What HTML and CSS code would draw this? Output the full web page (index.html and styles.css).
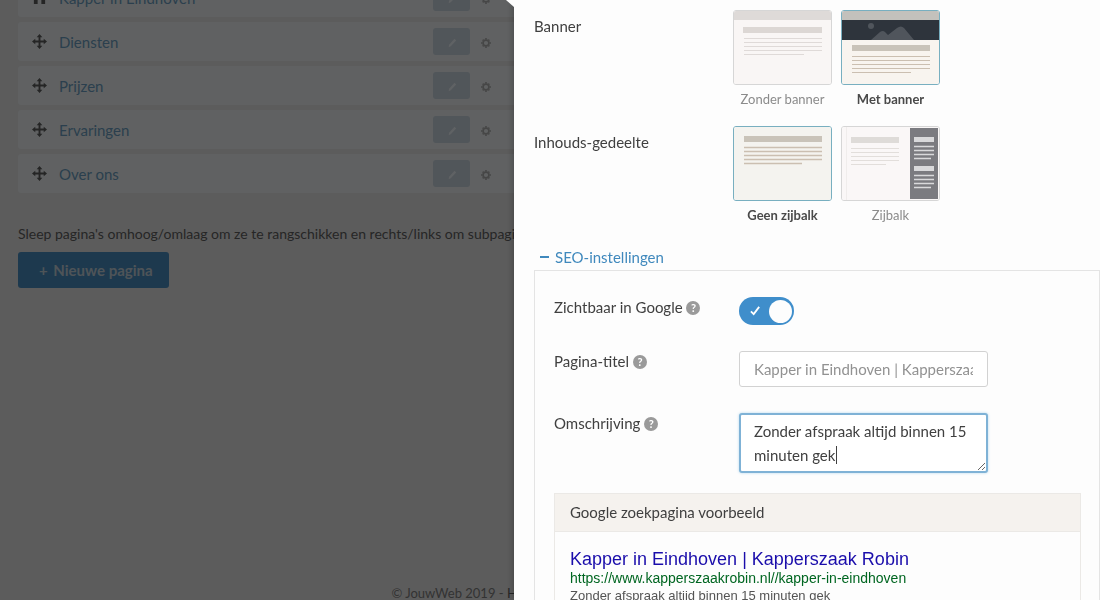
FILE: index.html
```html
<!DOCTYPE html>
<html lang="nl">
<head>
  <meta charset="UTF-8" />
  <title>Pagina's - JouwWeb</title>
  <meta name="viewport" content="width=device-width, initial-scale=1" />
  <link rel="stylesheet" href="styles.css">
</head>
<body>
  <svg width="0" height="0" class="sprite" aria-hidden="true">
    <symbol id="move" viewBox="0 0 16 16">
      <path d="M8 0l3 3.500H9V7h3.500V5L16 8l-3.500 3V9H9v3.500h2L8 16l-3-3.500h2V9H3.500v2L0 8l3.500-3v2H7V3.500H5z"/>
    </symbol>
    <symbol id="pencil" viewBox="0 0 12 12">
      <path d="M9 1l2 2-6.500 7L2 11l.500-3z"/>
    </symbol>
    <symbol id="gear" viewBox="0 0 12 12">
      <circle cx="6" cy="6" r="3.500" fill="none" stroke="currentColor" stroke-width="2"/>
      <path d="M6 0v2M6 10v2M0 6h2M10 6h2M2 2l1 1M9 9l1 1M2 10l1-1M9 3l1-1" stroke="currentColor" stroke-width="2"/>
    </symbol>
  </svg>

  <main class="page">
    <ul class="page-list">
      <li class="page-row">
        <svg class="move" viewBox="0 0 16 16"><path d="M8 1L0 8h2v7h4v-5h4v5h4V8h2z"/></svg>
        <a href="#">Kapper in Eindhoven</a>
        <button class="edit-btn" aria-label="Bewerken"><svg><use href="#pencil"/></svg></button>
        <button class="gear-btn" aria-label="Instellingen"><svg><use href="#gear"/></svg></button>
      </li>
      <li class="page-row">
        <svg class="move"><use href="#move"/></svg>
        <a href="#">Diensten</a>
        <button class="edit-btn" aria-label="Bewerken"><svg><use href="#pencil"/></svg></button>
        <button class="gear-btn" aria-label="Instellingen"><svg><use href="#gear"/></svg></button>
      </li>
      <li class="page-row">
        <svg class="move"><use href="#move"/></svg>
        <a href="#">Prijzen</a>
        <button class="edit-btn" aria-label="Bewerken"><svg><use href="#pencil"/></svg></button>
        <button class="gear-btn" aria-label="Instellingen"><svg><use href="#gear"/></svg></button>
      </li>
      <li class="page-row">
        <svg class="move"><use href="#move"/></svg>
        <a href="#">Ervaringen</a>
        <button class="edit-btn" aria-label="Bewerken"><svg><use href="#pencil"/></svg></button>
        <button class="gear-btn" aria-label="Instellingen"><svg><use href="#gear"/></svg></button>
      </li>
      <li class="page-row">
        <svg class="move"><use href="#move"/></svg>
        <a href="#">Over ons</a>
        <button class="edit-btn" aria-label="Bewerken"><svg><use href="#pencil"/></svg></button>
        <button class="gear-btn" aria-label="Instellingen"><svg><use href="#gear"/></svg></button>
      </li>
    </ul>
    <p class="hint">Sleep pagina's omhoog/omlaag om ze te rangschikken en rechts/links om subpagina's te maken.</p>
    <button class="new-page"><span>+</span> Nieuwe pagina</button>
    <footer>© JouwWeb 2019 - <a href="#">Help</a> - <a href="#">Voorwaarden</a> - <a href="#">Privacybeleid</a></footer>
  </main>

  <div class="overlay"></div>

  <aside class="panel">
    <div class="setting">
      <span class="setting-label" id="bannerLabel">Banner</span>
      <div class="options" role="radiogroup" aria-labelledby="bannerLabel">
        <label class="option">
          <input type="radio" name="banner">
          <svg class="thumb" viewBox="0 0 97 73">
            <rect width="97" height="73" fill="#f9f6f5"/>
            <rect width="97" height="9" fill="#dedad8"/>
            <rect x="9" y="16" width="79" height="6" fill="#dcd7d4"/>
            <path d="M10 27.500h78M10 31.500h78M10 35.500h78M10 39.500h78M10 43.500h60" stroke="#dfdad8"/>
          </svg>
          <span>Zonder banner</span>
        </label>
        <label class="option">
          <input type="radio" name="banner" checked>
          <svg class="thumb" viewBox="0 0 97 73">
            <rect width="97" height="73" fill="#f8f4ef"/>
            <rect width="97" height="9" fill="#c3c1bc"/>
            <rect y="9" width="97" height="20" fill="#2e343c"/>
            <circle cx="29" cy="15" r="3" fill="#50555c"/>
            <path d="M29 29l9-8q3-2 5 0l3 3 9-7q4-3 7 0l10 12z" fill="#50555c"/>
            <rect x="10" y="34" width="78" height="6" fill="#c9c3b9"/>
            <path d="M10 45.500h78M10 49.500h78M10 53.500h78M10 57.500h78M10 61.500h59" stroke="#cbbfb1"/>
          </svg>
          <span>Met banner</span>
        </label>
      </div>
    </div>

    <div class="setting">
      <span class="setting-label" id="contentLabel">Inhouds-gedeelte</span>
      <div class="options" role="radiogroup" aria-labelledby="contentLabel">
        <label class="option">
          <input type="radio" name="sidebar" checked>
          <svg class="thumb" viewBox="0 0 97 73">
            <rect width="97" height="73" fill="#f4f3ef"/>
            <rect x="10" y="9" width="78" height="6" fill="#c9c3b9"/>
            <path d="M10 20.500h78M10 24.500h78M10 28.500h78M10 32.500h78M10 36.500h58" stroke="#cbbfb1" stroke-width="1.500"/>
          </svg>
          <span>Geen zijbalk</span>
        </label>
        <label class="option">
          <input type="radio" name="sidebar">
          <svg class="thumb" viewBox="0 0 97 73">
            <rect width="97" height="73" fill="#faf7f7"/>
            <path d="M4.500 0v73" stroke="#f0edec"/>
            <rect x="9" y="10" width="48" height="6" fill="#dedbd8"/>
            <path d="M9 21.500h48M9 25.500h48M9 29.500h48M9 33.500h48M9 37.500h35" stroke="#e2dedb"/>
            <rect x="68" y="1" width="28" height="71" fill="#7b7b80"/>
            <path d="M72 12.500h20M72 41.500h20" stroke="#d9d9db" stroke-width="5"/>
            <path d="M72 19.500h20M72 23.500h20M72 27.500h20M72 31.500h17M72 48.500h20M72 52.500h20M72 56.500h20M72 60.500h17" stroke="#d9d9db" stroke-width="1.500"/>
          </svg>
          <span>Zijbalk</span>
        </label>
      </div>
    </div>

    <a class="seo-toggle" href="#seo"><i></i>SEO-instellingen</a>
    <section class="seo" id="seo">
      <div class="field">
        <label for="visible">Zichtbaar in Google <span class="help">?</span></label>
        <div class="switch">
          <input type="checkbox" id="visible" checked>
          <svg viewBox="0 0 12 12"><path d="M1 7l3 3 6-8" fill="none" stroke="#fff" stroke-width="2"/></svg>
        </div>
      </div>
      <div class="field">
        <label for="pageTitle">Pagina-titel <span class="help">?</span></label>
        <input type="text" id="pageTitle" placeholder="Kapper in Eindhoven | Kapperszaak Robin">
      </div>
      <div class="field">
        <label for="description">Omschrijving <span class="help">?</span></label>
        <div class="editor">
          <textarea id="description" rows="2">Zonder afspraak altijd binnen 15 minuten gek</textarea>
          <span class="caret"></span>
        </div>
      </div>

      <div class="preview">
        <h3>Google zoekpagina voorbeeld</h3>
        <div class="result">
          <a href="#">Kapper in Eindhoven | Kapperszaak Robin</a>
          <cite>https://www.kapperszaakrobin.nl//kapper-in-eindhoven</cite>
          <p>Zonder afspraak altijd binnen 15 minuten gek</p>
        </div>
      </div>
    </section>
  </aside>

  <script>
    const description = document.getElementById("description");
    description.focus({ preventScroll: true });
    description.setSelectionRange(description.value.length, description.value.length);
  </script>
</body>
</html>
```

FILE: styles.css
```css
* { box-sizing: border-box; }
body {
  margin: 0; height: 100vh; overflow: hidden;
  font-family: Lato, "Open Sans", sans-serif; font-size: 15px; line-height: 20px;
  background: #e6e6e6; color: #404040;
}
a { text-decoration: none; }
button { font: inherit; border: none; cursor: pointer; }
.sprite { position: absolute; }

/* page behind the panel */
.page {
  height: 100vh; padding: 0 18px;
  display: flex; flex-direction: column; align-items: flex-start;
}
.page-list {
  list-style: none; margin: -22px 0 0; padding: 0;
  width: 530px; max-width: 100%;
  display: flex; flex-direction: column; gap: 5px;
}
.page-row {
  height: 39px; padding: 0 57px 0 14px;
  display: flex; align-items: center;
  background: #eff3f5; border-radius: 3px;
}
.page-row a { flex: 1; margin-left: 12px; color: #6c9fc2; }
.move { width: 15px; height: 15px; fill: #5c5c5c; }
.edit-btn {
  width: 37px; height: 27px; border-radius: 3px; padding: 0;
  background: #cad6e1; color: #f3f9ff;
}
.edit-btn svg { width: 10px; height: 10px; fill: #eef4fa; }
.gear-btn { padding: 0; margin-left: 11px; width: 10px; height: 27px; background: none; color: #b0b0b0; }
.gear-btn svg { width: 10px; height: 10px; }
.hint { margin: 31px 0 8px; font-size: 14px; white-space: nowrap; color: #606060; }
.new-page {
  height: 36px; padding: 0 16px 0 21px; border-radius: 3px;
  background: #4a8fc2; color: #c4d2dc; font-weight: bold;
}
.new-page span { margin-right: 2px; }
.page footer { margin: auto auto 0; color: #808080; font-size: 13px; line-height: 14px; }
.page footer a { color: #606060; }

.overlay { position: fixed; inset: 0; background: rgba(0,0,0,0.6); }

/* settings panel */
.panel {
  position: fixed; top: 0; right: 0; bottom: 0;
  width: 586px; max-width: 100%; padding: 10px 0 0 20px;
  background: #fdfdfd; box-shadow: 0 0 8px rgba(0,0,0,0.3);
}
.panel::before {
  content: ""; position: absolute; left: -8px; top: 0;
  width: 8px; height: 7px; background: #fdfdfd;
  clip-path: polygon(0 0, 100% 0, 100% 100%);
}
.setting { display: grid; grid-template-columns: 199px 1fr; margin-bottom: 17px; }
.setting-label { padding-top: 6px; }
.options { display: flex; gap: 9px; }
.option {
  position: relative; width: 99px; cursor: pointer;
  display: flex; flex-direction: column; gap: 4px;
  text-align: center; font-size: 13px; color: #8b8b8b; white-space: nowrap;
}
.option input { position: absolute; opacity: 0; }
.thumb { width: 99px; height: 75px; border: 1px solid #d6d6d6; border-radius: 3px; }
.option input:checked ~ .thumb { border-color: #78afc0; }
.option input:checked ~ span { font-weight: bold; color: #4a4a4a; }

.seo-toggle { display: flex; align-items: center; gap: 6px; margin: 22px 0 0 6px; color: #4089bd; }
.seo-toggle i { width: 9px; height: 2px; background: #4089bd; }
.seo { margin-top: 3px; padding: 26px 18px 0 19px; border: 1px solid #e4e4e4; height: 100vh; }
.field {
  display: grid; grid-template-columns: 185px 249px;
  margin-bottom: 26px; align-items: start;
}
.help {
  display: inline-block; width: 14px; height: 14px; border-radius: 50%;
  background: #9a9a9a; color: #fff; text-align: center;
  font-size: 11px; font-weight: bold; line-height: 14px; vertical-align: 1px;
}
.switch { position: relative; width: 55px; height: 28px; }
.switch input {
  appearance: none; display: flex; justify-content: flex-end; align-items: center;
  width: 100%; height: 100%; margin: 0; padding: 2px;
  border-radius: 14px; background: #3f8ecb; cursor: pointer;
}
.switch input::after { content: ""; width: 23px; height: 23px; border-radius: 50%; background: #fdfdfd; }
.switch svg { position: absolute; left: 11px; top: 8px; width: 11px; height: 11px; }
.field input[type="text"], textarea {
  display: block; width: 100%; padding: 5px 14px;
  font: inherit; color: #404040; background: #fff;
  border: 1px solid #d2d2d2; border-radius: 3px; outline: none;
}
.field input[type="text"] { height: 36px; }
.field input::placeholder { color: #929292; }
.editor { position: relative; }
.field textarea { line-height: 24px; overflow: hidden; caret-color: transparent; }
textarea:focus { border: 2px solid #7fb2d6; box-shadow: 0 0 3px #b4d8ee; padding: 4px 13px; }
.caret { position: absolute; left: 97px; top: 33px; width: 1px; height: 18px; background: #404040; }

.preview { border: 1px solid #ebe9e6; margin-top: -6px; }
.preview h3 {
  margin: 0; padding: 8px 15px 9px; background: #f5f2ee; border-bottom: 1px solid #ebe9e6;
  font-size: 15px; font-weight: normal;
}
.result { padding: 16px 15px; font-family: "Liberation Sans", Arial, sans-serif; }
.result a { display: block; font-size: 18px; line-height: 22px; color: #1a0dab; }
.result cite { display: block; font-size: 14px; line-height: 16px; font-style: normal; color: #006621; }
.result p { margin: 0; font-size: 13px; line-height: 20px; color: #545454; }
```
